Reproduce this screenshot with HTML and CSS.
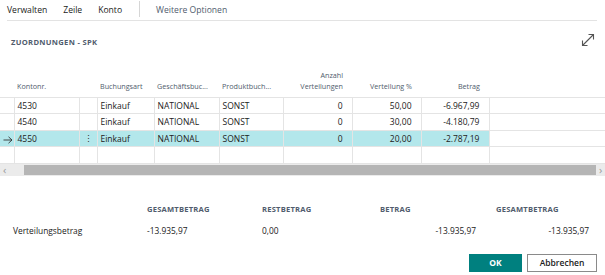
FILE: index.html
```html
<!DOCTYPE html>
<html lang="de">

<head>
    <meta charset="UTF-8">
    <meta name="viewport" content="width=device-width, initial-scale=1.0">
    <title>Zuordnungen - SPK</title>
    <link rel="stylesheet" href="styles.css">
</head>

<body>

    <div class="menu">
        <span class="menu-item">Verwalten</span>
        <span class="menu-item">Zeile</span>
        <span class="menu-item">Konto</span>
        <span class="menu-sep"></span>
        <span class="menu-item more">Weitere Optionen</span>
    </div>

    <div class="title-row">
        <h1 class="title">ZUORDNUNGEN - SPK</h1>
        <svg class="expand" width="14" height="14" viewBox="0 0 14 14">
            <path d="M1.5 12.5 L12.5 1.5 M7.5 1.5 H12.5 V6.5 M1.5 7.5 V12.5 H6.5" fill="none" stroke="#555" stroke-width="1.1" />
        </svg>
    </div>

    <table class="grid">
        <colgroup>
            <col style="width:14px">
            <col style="width:65px">
            <col style="width:18px">
            <col style="width:57px">
            <col style="width:65px">
            <col style="width:64px">
            <col style="width:69px">
            <col style="width:69px">
            <col style="width:68px">
            <col>
        </colgroup>
        <thead>
            <tr>
                <th></th>
                <th>Kontonr.</th>
                <th></th>
                <th>Buchungsart</th>
                <th>Geschäftsbuc...</th>
                <th>Produktbuch...</th>
                <th class="num">Anzahl<br>Verteilungen</th>
                <th class="num">Verteilung %</th>
                <th class="num">Betrag</th>
                <th></th>
            </tr>
        </thead>
        <tbody>
            <tr>
                <td></td>
                <td>4530</td>
                <td class="dots"></td>
                <td class="frozen">Einkauf</td>
                <td>NATIONAL</td>
                <td>SONST</td>
                <td class="num">0</td>
                <td class="num">50,00</td>
                <td class="num">-6.967,99</td>
                <td></td>
            </tr>
            <tr>
                <td></td>
                <td>4540</td>
                <td class="dots"></td>
                <td class="frozen">Einkauf</td>
                <td>NATIONAL</td>
                <td>SONST</td>
                <td class="num">0</td>
                <td class="num">30,00</td>
                <td class="num">-4.180,79</td>
                <td></td>
            </tr>
            <tr class="selected">
                <td class="arrow">
                    <svg width="10" height="8" viewBox="0 0 10 8">
                        <path d="M0.5 4 H9 M5.5 0.8 L9 4 L5.5 7.2" fill="none" stroke="#333" stroke-width="0.9" />
                    </svg>
                </td>
                <td>4550</td>
                <td class="dots">&#8942;</td>
                <td class="frozen">Einkauf</td>
                <td>NATIONAL</td>
                <td>SONST</td>
                <td class="num">0</td>
                <td class="num">20,00</td>
                <td class="num">-2.787,19</td>
                <td class="blank"></td>
            </tr>
            <tr>
                <td></td>
                <td></td>
                <td></td>
                <td class="frozen"></td>
                <td></td>
                <td></td>
                <td></td>
                <td></td>
                <td></td>
                <td></td>
            </tr>
        </tbody>
    </table>

    <div class="scrollbar">
        <span class="scroll-arrow">&lsaquo;</span>
        <div class="scroll-thumb"></div>
        <span class="scroll-arrow">&rsaquo;</span>
    </div>

    <div class="summary">
        <span></span>
        <span class="sum-head">GESAMTBETRAG</span>
        <span class="sum-head">RESTBETRAG</span>
        <span class="sum-head">BETRAG</span>
        <span class="sum-head last">GESAMTBETRAG</span>

        <span>Verteilungsbetrag</span>
        <span>-13.935,97</span>
        <span>0,00</span>
        <span class="right inset">-13.935,97</span>
        <span class="right">-13.935,97</span>
    </div>

    <div class="buttons">
        <button class="btn primary">OK</button>
        <button class="btn">Abbrechen</button>
    </div>

</body>

</html>
```

FILE: styles.css
```css
* {
    margin: 0;
    box-sizing: border-box;
}

body {
    background-color: #ffffff;
    font-family: 'Open Sans', 'Noto Sans', sans-serif;
    color: #212121;
    font-size: 8.5px;
}

.menu {
    display: flex;
    align-items: center;
    height: 21px;
    margin: 0 8px 0 7px;
    border-bottom: 1px solid #e3e3e3;
}

.menu-item {
    margin-right: 16px;
    font-size: 8.6px;
    color: #212121;
    padding-bottom: 1px;
}

.menu-sep {
    width: 1px;
    height: 16px;
    background-color: #d6d6d6;
    margin: 0 16px 2px 1px;
}

.more {
    color: #505c6d;
}

.title-row {
    display: flex;
    justify-content: space-between;
    align-items: flex-start;
    padding: 15px 10px 0 11px;
    height: 45px;
}

.title {
    font-size: 7.6px;
    line-height: 12px;
    font-weight: 700;
    color: #505c6d;
    letter-spacing: 0.3px;
}

.expand {
    margin-top: -3px;
}

.grid {
    border-collapse: collapse;
    table-layout: fixed;
    width: 100%;
}

.grid th {
    height: 31px;
    font-size: 7.2px;
    font-weight: 400;
    color: #505c6d;
    text-align: left;
    vertical-align: bottom;
    padding: 0 3px 5px 3px;
    line-height: 11px;
    white-space: nowrap;
    overflow: hidden;
    border-bottom: 1px solid #e4e4e4;
}

.grid td {
    height: 16.5px;
    padding: 0 3px;
    font-size: 8.5px;
    white-space: nowrap;
    border: 1px solid #e4e4e4;
    border-top: none;
}

.grid td:first-child {
    border-left: none;
}

.grid td:last-child {
    border-right: none;
}

.grid .num {
    text-align: right;
    padding-right: 9px;
}

.grid .frozen {
    border-left: 1px solid #c8c8c8;
}

.selected td {
    background-color: #b3e7eb;
}

.selected td.blank {
    background-color: #ffffff;
}

.grid td.arrow {
    padding: 3px 0 0 3px;
    line-height: 0;
}

.dots {
    text-align: center;
    font-size: 12px;
    color: #333;
}

.scrollbar {
    display: flex;
    align-items: center;
    height: 12px;
    background-color: #ebebeb;
}

.scroll-arrow {
    width: 24px;
    color: #9a9a9a;
    font-size: 11px;
    padding-left: 3px;
    line-height: 12px;
}

.scroll-arrow:last-child {
    width: 9px;
}

.scroll-thumb {
    flex: 1;
    height: 10px;
    background-color: #b5b5b5;
}

.summary {
    display: grid;
    grid-template-columns: 134px 115px 118px 100px 109px;
    grid-template-rows: 22px 22px;
    align-items: center;
    padding: 22px 0 0 13px;
    font-size: 8.4px;
}

.sum-head {
    font-size: 7.6px;
    font-weight: 700;
    color: #505c6d;
    letter-spacing: 0.2px;
}

.right {
    text-align: right;
}

.inset {
    padding-right: 4px;
}

.sum-head.last {
    padding-left: 16px;
}

.buttons {
    display: flex;
    justify-content: flex-end;
    gap: 5px;
    padding: 12px 8px 0 0;
}

.btn {
    height: 18px;
    width: 70px;
    background-color: #ffffff;
    border: 1px solid #8a8a8a;
    font-family: 'Open Sans', 'Noto Sans', sans-serif;
    font-size: 8.5px;
    font-weight: 600;
    color: #212121;
}

.btn.primary {
    width: 53px;
    background-color: #00807f;
    border-color: #00807f;
    color: #ffffff;
    font-weight: 700;
}
```
